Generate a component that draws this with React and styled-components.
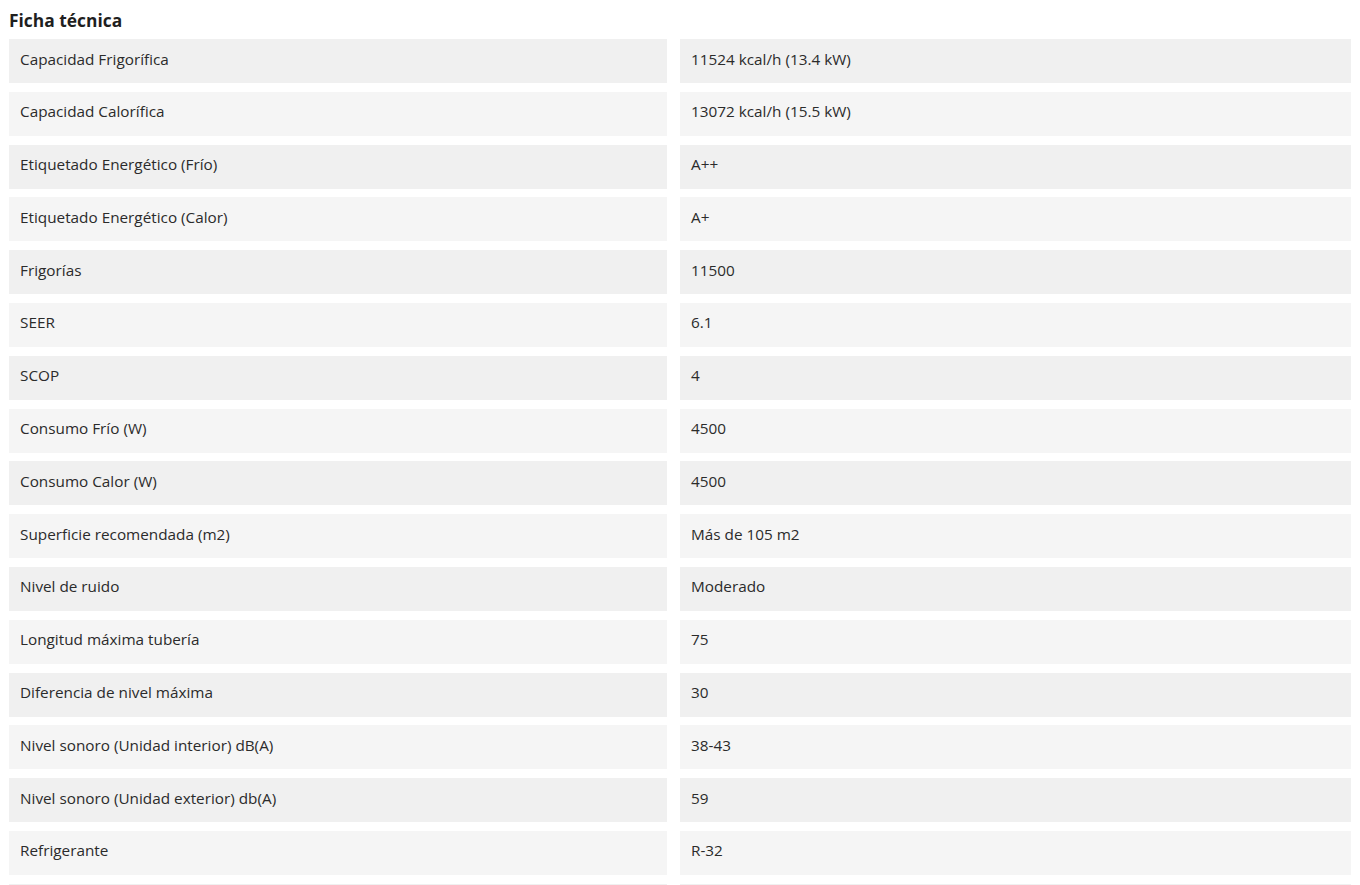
import React from "react";
import styled, { createGlobalStyle } from "styled-components";

const Global = createGlobalStyle`
  html, body { margin: 0; padding: 0; background: #ffffff; }
  body { font-family: "Open Sans", "Noto Sans", sans-serif; color: #2b2b2b; }
`;

const Page = styled.div`
  padding: 8px 9px 0 9px;
`;

const Title = styled.h2`
  margin: 0 0 7px 0;
  font-size: 17.4px;
  line-height: 24px;
  font-weight: 700;
  color: #1f1f1f;
`;

const Table = styled.div`
  display: grid;
  grid-template-columns: 658px 671px;
  column-gap: 13px;
  row-gap: 8.8px;
  grid-auto-rows: 44px;
`;

const Cell = styled.div`
  display: flex;
  align-items: center;
  padding: 0 11px 5px 11px;
  font-size: 15.3px;
  background: ${(p) => (p.$odd ? "#f0f0f0" : "#f5f5f5")};
  color: #2b2b2b;
  white-space: nowrap;
`;

const rows = [
  ["Capacidad Frigorífica", "11524 kcal/h (13.4 kW)"],
  ["Capacidad Calorífica", "13072 kcal/h (15.5 kW)"],
  ["Etiquetado Energético (Frío)", "A++"],
  ["Etiquetado Energético (Calor)", "A+"],
  ["Frigorías", "11500"],
  ["SEER", "6.1"],
  ["SCOP", "4"],
  ["Consumo Frío (W)", "4500"],
  ["Consumo Calor (W)", "4500"],
  ["Superficie recomendada (m2)", "Más de 105 m2"],
  ["Nivel de ruido", "Moderado"],
  ["Longitud máxima tubería", "75"],
  ["Diferencia de nivel máxima", "30"],
  ["Nivel sonoro (Unidad interior) dB(A)", "38-43"],
  ["Nivel sonoro (Unidad exterior) db(A)", "59"],
  ["Refrigerante", "R-32"],
  ["", ""],
];

export default function App() {
  return (
    <>
      <Global />
      <Page>
        <Title>Ficha técnica</Title>
        <Table>
          {rows.map(([k, v], i) => (
            <React.Fragment key={i}>
              <Cell $odd={i % 2 === 0}>{k}</Cell>
              <Cell $odd={i % 2 === 0}>{v}</Cell>
            </React.Fragment>
          ))}
        </Table>
      </Page>
    </>
  );
}
